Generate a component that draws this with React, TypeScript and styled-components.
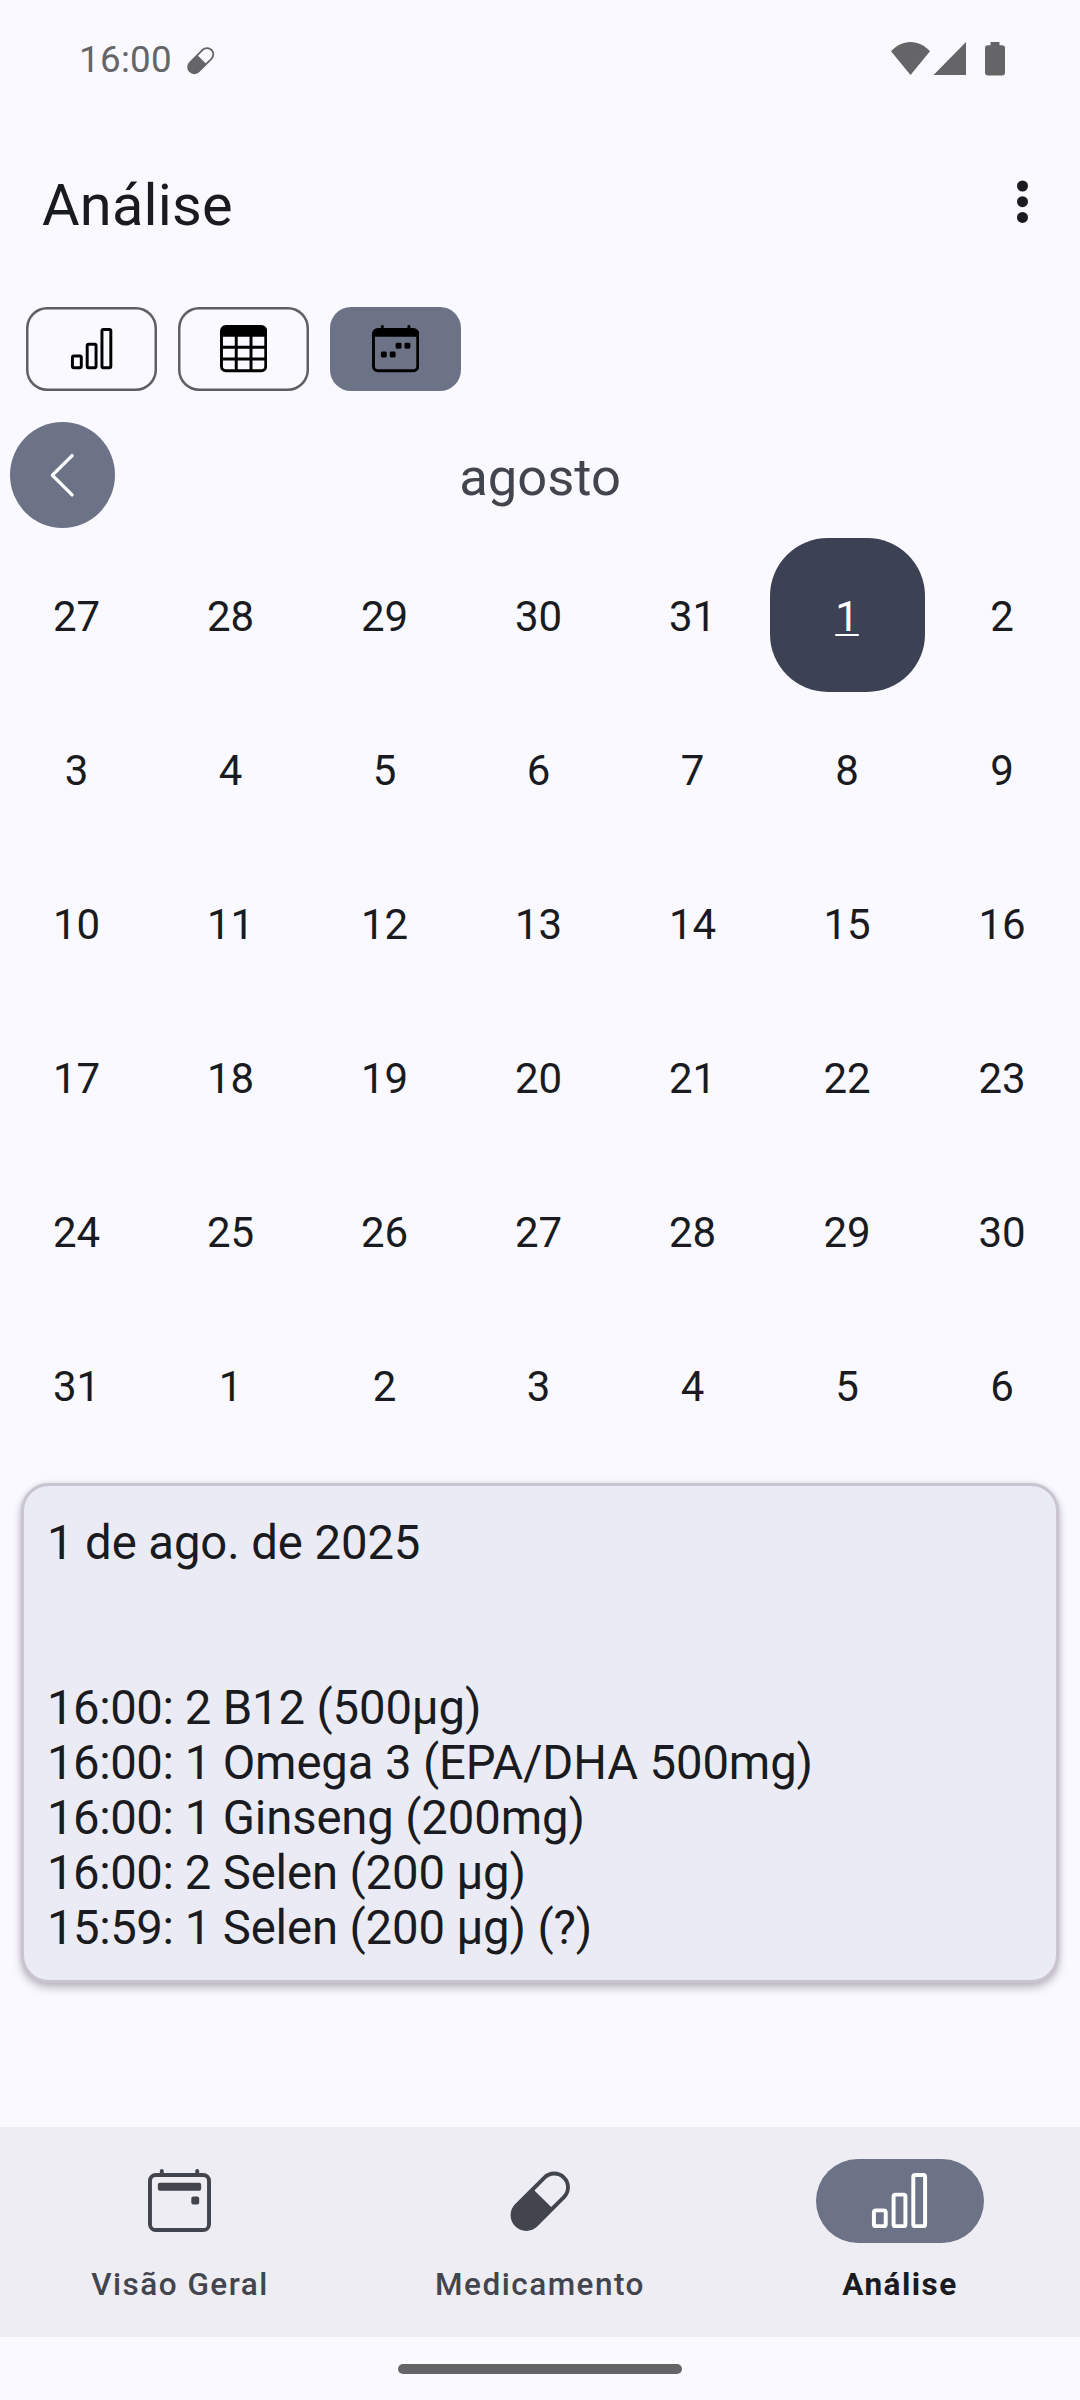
import React from "react";
import styled, { createGlobalStyle } from "styled-components";
import {
  BsBarChart,
  BsCalendar2Event,
  BsCalendarWeek,
  BsCapsule,
  BsChevronLeft,
  BsTable,
} from "react-icons/bs";

const color = {
  background: "#f9f9ff",
  text: "#1a1b20",
  muted: "#43454e",
  system: "#656567",
  accent: "#6d7387",
  selected: "#3c4154",
  card: "#ebebf5",
  cardBorder: "#c9c4d0",
  nav: "#eeedf3",
};

const GlobalStyle = createGlobalStyle`
  * { box-sizing: border-box; }
  body { margin: 0; background: ${color.background}; }
  button { font: inherit; color: inherit; border: 0; padding: 0; background: none; }
  svg { display: block; flex: none; }
`;

const Screen = styled.div`
  width: 1080px;
  height: 2400px;
  display: flex;
  flex-direction: column;
  overflow: hidden;
  background: ${color.background};
  color: ${color.text};
  font-family: Roboto, sans-serif;
`;

const StatusBar = styled.div`
  height: 118px;
  display: flex;
  align-items: center;
  justify-content: space-between;
  padding: 0 75px 0 79px;
  color: ${color.system};
`;

const StatusLeft = styled.div`
  display: flex;
  align-items: center;
  gap: 14px;
`;

const Clock = styled.span`
  padding-top: 1px;
  font-size: 36.75px;
  line-height: 44px;
  letter-spacing: 0.3px;
`;

const PillNotice = styled(BsCapsule)`
  margin-top: 3px;
`;

const AppBar = styled.header`
  height: 166px;
  display: flex;
  align-items: center;
  justify-content: space-between;
  padding: 0 26px 0 42px;
`;

const Title = styled.h1`
  margin: 0;
  padding-top: 7px;
  font-size: 57.75px;
  font-weight: 400;
  line-height: 74px;
  letter-spacing: 0.2px;
`;

const MenuButton = styled.button`
  width: 63px;
  height: 63px;
  display: flex;
  align-items: center;
  justify-content: center;
`;

const ViewSwitch = styled.div`
  display: flex;
  gap: 21px;
  padding: 23px 26px 31px;
`;

const ViewChip = styled.button<{ $active?: boolean }>`
  width: 131px;
  height: 84px;
  display: flex;
  align-items: center;
  justify-content: center;
  border-radius: 21px;
  box-shadow: ${(p) => (p.$active ? "none" : "inset 0 0 0 2.5px #5e5f63")};
  background: ${(p) => (p.$active ? color.accent : "transparent")};
  color: #000;
`;

const MonthHeader = styled.div`
  height: 116px;
  display: grid;
  grid-template-columns: 105px 1fr 105px;
  padding: 0 10px;
`;

const PreviousButton = styled.button`
  width: 105px;
  height: 106px;
  display: flex;
  align-items: center;
  justify-content: center;
  border-radius: 50%;
  background: ${color.accent};
  color: #fff;
`;

const MonthName = styled.h2`
  margin: 0;
  padding-top: 24px;
  font-size: 52.5px;
  line-height: 62px;
  font-weight: 400;
  text-align: center;
  color: ${color.muted};
`;

const DayGrid = styled.div`
  display: grid;
  grid-template-columns: repeat(5, 154px) repeat(2, 155px);
  grid-auto-rows: 154px;
`;

const Day = styled.button<{ $selected?: boolean }>`
  display: flex;
  align-items: center;
  justify-content: center;
  padding: 3px 1px 0 0;
  border-radius: 57.75px;
  font-size: 42px;
  line-height: 49px;
  background: ${(p) => (p.$selected ? color.selected : "transparent")};
  color: ${(p) => (p.$selected ? "#fff" : color.text)};
  text-decoration: ${(p) => (p.$selected ? "underline" : "none")};
  text-decoration-thickness: 2px;
  text-underline-offset: 3px;
  text-decoration-skip-ink: none;
`;

const Card = styled.section`
  height: 500px;
  margin: 21px 21px 144px;
  padding: 30px 23px 0;
  border: 3px solid ${color.cardBorder};
  border-radius: 28px;
  background: ${color.card};
  box-shadow: 0 5px 8px rgba(60, 45, 60, 0.3), 0 0 5px rgba(60, 45, 60, 0.12);
  font-size: 47.25px;
  line-height: 55px;
`;

const CardDate = styled.p`
  margin: 0 0 110px;
  letter-spacing: -0.08px;
`;

const IntakeList = styled.ul`
  margin: 0;
  padding: 0;
  list-style: none;
`;

const Intake = styled.li`
  white-space: pre;
  letter-spacing: -0.12px;
`;

const IntakeTime = styled.span`
  letter-spacing: -0.45px;
`;

const BottomNav = styled.nav`
  height: 210px;
  display: grid;
  grid-template-columns: repeat(3, 1fr);
  background: ${color.nav};
`;

const NavItem = styled.button<{ $active?: boolean }>`
  display: flex;
  flex-direction: column;
  align-items: center;
  gap: 23px;
  padding-top: 32px;
  color: ${(p) => (p.$active ? color.text : color.muted)};
  font-weight: ${(p) => (p.$active ? 700 : 500)};
`;

const NavIndicator = styled.span<{ $active?: boolean }>`
  width: 168px;
  height: 84px;
  display: flex;
  align-items: center;
  justify-content: center;
  padding: 0 2px 1px 0;
  border-radius: 42px;
  background: ${(p) => (p.$active ? color.accent : "transparent")};
  color: ${(p) => (p.$active ? "#fff" : "inherit")};
`;

const NavLabel = styled.span`
  font-size: 31.5px;
  line-height: 37px;
  letter-spacing: 1.5px;
`;

const GestureArea = styled.div`
  height: 63px;
  display: flex;
  justify-content: center;
  padding-top: 27px;
`;

const GestureHandle = styled.div`
  width: 284px;
  height: 10px;
  border-radius: 5px;
  background: ${color.system};
`;

const SystemIcons = () => (
  <svg width="114" height="34" viewBox="0 0 114 34" fill="currentColor">
    <path d="M0 9.2C5.2 3.6 12 0 19.5 0S33.8 3.6 39 9.2L19.5 33Z" />
    <path d="M42.5 33L75 0V33Z" />
    <path d="M99.5 0h9v3.300h2.500a3 3 0 0 1 3 3V30.500a3 3 0 0 1-3 3H97a3 3 0 0 1-3-3V6.300a3 3 0 0 1 3-3h2.500Z" />
  </svg>
);

const MoreIcon = () => (
  <svg width="63" height="63" viewBox="0 0 63 63" fill="currentColor">
    <circle cx="31.5" cy="16" r="5.5" />
    <circle cx="31.5" cy="31.7" r="5.5" />
    <circle cx="31.5" cy="47.4" r="5.5" />
  </svg>
);

const SELECTED_INDEX = 5;

const days = [
  27, 28, 29, 30, 31,
  ...Array.from({ length: 31 }, (_, i) => i + 1),
  1, 2, 3, 4, 5, 6,
];

const intakes = [
  { time: "16:00", what: "2 B12 (500µg)" },
  { time: "16:00", what: "1 Omega 3 (EPA/DHA 500mg)" },
  { time: "16:00", what: "1 Ginseng (200mg)" },
  { time: "16:00", what: "2 Selen (200 µg)" },
  { time: "15:59", what: "1 Selen (200 µg) (?)" },
];

const views = [
  { name: "chart", Icon: BsBarChart },
  { name: "table", Icon: BsTable },
  { name: "calendar", Icon: BsCalendarWeek, active: true },
];

const navItems = [
  { label: "Visão Geral", Icon: BsCalendar2Event },
  { label: "Medicamento", Icon: BsCapsule },
  { label: "Análise", Icon: BsBarChart, active: true },
];

export default function App() {
  return (
    <Screen>
      <GlobalStyle />
      <StatusBar>
        <StatusLeft>
          <Clock>16:00</Clock>
          <PillNotice size={28.7} />
        </StatusLeft>
        <SystemIcons />
      </StatusBar>
      <AppBar>
        <Title>Análise</Title>
        <MenuButton>
          <MoreIcon />
        </MenuButton>
      </AppBar>
      <ViewSwitch>
        {views.map(({ name, Icon, active }) => (
          <ViewChip key={name} $active={active}>
            <Icon size={47.25} />
          </ViewChip>
        ))}
      </ViewSwitch>
      <MonthHeader>
        <PreviousButton>
          <BsChevronLeft size={52.5} />
        </PreviousButton>
        <MonthName>agosto</MonthName>
      </MonthHeader>
      <DayGrid>
        {days.map((day, i) => (
          <Day key={i} $selected={i === SELECTED_INDEX}>
            {day}
          </Day>
        ))}
      </DayGrid>
      <Card>
        <CardDate>1 de ago. de 2025</CardDate>
        <IntakeList>
          {intakes.map(({ time, what }) => (
            <Intake key={time + what}>
              <IntakeTime>{time}: </IntakeTime>
              {what}
            </Intake>
          ))}
        </IntakeList>
      </Card>
      <BottomNav>
        {navItems.map(({ label, Icon, active }) => (
          <NavItem key={label} $active={active}>
            <NavIndicator $active={active}>
              <Icon size={63} />
            </NavIndicator>
            <NavLabel>{label}</NavLabel>
          </NavItem>
        ))}
      </BottomNav>
      <GestureArea>
        <GestureHandle />
      </GestureArea>
    </Screen>
  );
}
